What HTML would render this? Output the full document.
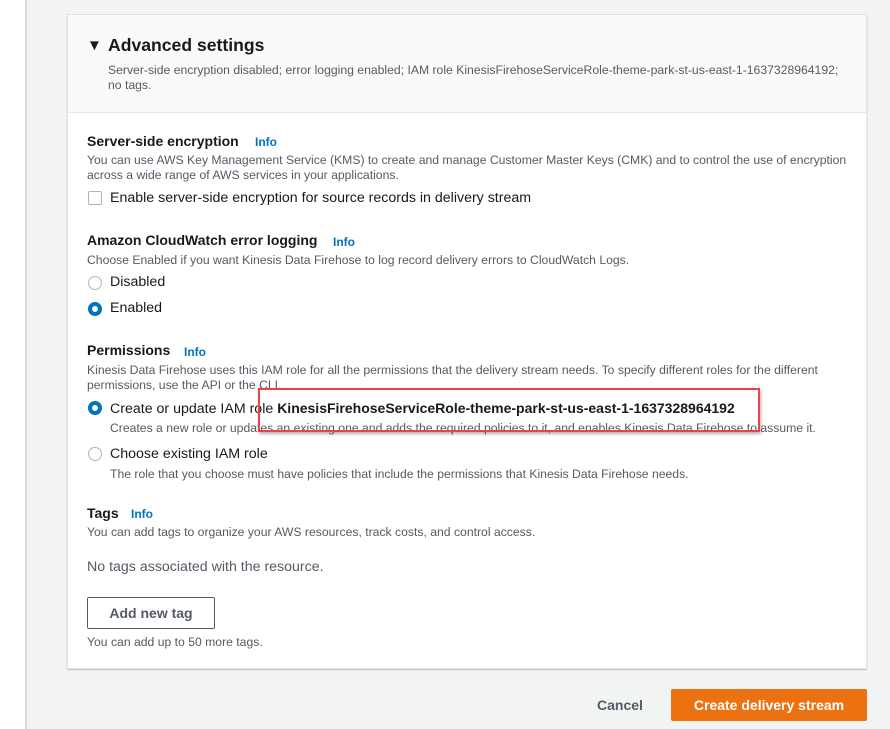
<!DOCTYPE html>
<html><head><style>
*{margin:0;padding:0;box-sizing:border-box}
body{width:890px;height:729px;position:relative;overflow:hidden;background:#f2f3f3;font-family:"Liberation Sans",sans-serif;color:#16191f}
.l{position:absolute;left:0;top:0;width:27px;height:729px;background:#fff;border-right:2px solid #d5dbdb}
.card{position:absolute;left:67px;top:14px;width:800px;height:655px;background:#fff;border:1px solid #e0e3e3;box-shadow:0 1px 1px rgba(0,0,0,.2)}
.hd{position:absolute;left:0;top:0;width:798px;height:98px;background:#fafafa;border-bottom:1px solid #e5e8e8}
.t{position:absolute;white-space:nowrap}
.h{font-size:14px;font-weight:bold}
.s{font-size:12.2px!important;color:#545b64}
.n{font-size:14.2px}
.i{font-size:12px;font-weight:bold;color:#0073bb}
.rad{position:absolute;width:14px;height:14px;border-radius:50%;border:1px solid #aab7b8;background:#fff}
.rad.on{border:4px solid #0073bb}
</style></head><body>
<div class="l"></div>
<div class="card">
<div class="hd"></div>
<div class="t" style="left:19px;top:22px;font-size:15px">▼</div>
<div class="t" style="left:40px;top:20px;font-size:17.6px;font-weight:bold">Advanced settings</div>
<div class="t s" style="left:40px;top:48px">Server-side encryption disabled; error logging enabled; IAM role KinesisFirehoseServiceRole-theme-park-st-us-east-1-1637328964192;</div>
<div class="t s" style="left:40px;top:63px">no tags.</div>

<div class="t h" style="left:19px;top:118px">Server-side encryption</div><div class="t i" style="left:187px;top:120px">Info</div>
<div class="t s" style="left:19px;top:138px">You can use AWS Key Management Service (KMS) to create and manage Customer Master Keys (CMK) and to control the use of encryption</div>
<div class="t s" style="left:19px;top:153px">across a wide range of AWS services in your applications.</div>
<div style="position:absolute;left:20px;top:176px;width:14px;height:14px;border:1px solid #aab7b8;border-radius:2px"></div>
<div class="t n" style="left:42px;top:175px">Enable server-side encryption for source records in delivery stream</div>

<div class="t h" style="left:19px;top:217px">Amazon CloudWatch error logging</div><div class="t i" style="left:265px;top:220px">Info</div>
<div class="t s" style="left:19px;top:238px">Choose Enabled if you want Kinesis Data Firehose to log record delivery errors to CloudWatch Logs.</div>
<div class="rad" style="left:20px;top:261px"></div><div class="t n" style="left:42px;top:259px">Disabled</div>
<div class="rad on" style="left:20px;top:287px"></div><div class="t n" style="left:42px;top:285px">Enabled</div>

<div class="t h" style="left:19px;top:327px">Permissions</div><div class="t i" style="left:116px;top:330px">Info</div>
<div class="t s" style="left:19px;top:348px">Kinesis Data Firehose uses this IAM role for all the permissions that the delivery stream needs. To specify different roles for the different</div>
<div class="t s" style="left:19px;top:363px">permissions, use the API or the CLI.</div>
<div class="rad on" style="left:20px;top:386px"></div><div class="t n" style="left:42px;top:385px">Create or update IAM role <b style="font-size:14px">KinesisFirehoseServiceRole-theme-park-st-us-east-1-1637328964192</b></div>
<div class="t s" style="left:42px;top:406px">Creates a new role or updates an existing one and adds the required policies to it, and enables Kinesis Data Firehose to assume it.</div>
<div class="rad" style="left:20px;top:432px"></div><div class="t n" style="left:42px;top:431px">Choose existing IAM role</div>
<div class="t s" style="left:42px;top:452px">The role that you choose must have policies that include the permissions that Kinesis Data Firehose needs.</div>

<div class="t h" style="left:19px;top:490px">Tags</div><div class="t i" style="left:63px;top:492px">Info</div>
<div class="t s" style="left:19px;top:510px">You can add tags to organize your AWS resources, track costs, and control access.</div>
<div class="t n" style="left:19px;top:544px;color:#545b64">No tags associated with the resource.</div>
<div style="position:absolute;left:19px;top:582px;width:128px;height:32px;border:1px solid #545b64;border-radius:2px;font-size:14px;font-weight:bold;color:#545b64;text-align:center;line-height:30px">Add new tag</div>
<div class="t s" style="left:19px;top:620px">You can add up to 50 more tags.</div>
</div>
<div style="position:absolute;left:258px;top:388px;width:502px;height:44px;border:2px solid #e8434a;box-shadow:1px 2px 3px rgba(0,0,0,.3)"></div>
<div class="t" style="left:597px;top:697px;font-size:14px;font-weight:bold;color:#545b64">Cancel</div>
<div style="position:absolute;left:671px;top:689px;width:196px;height:32px;background:#ec7211;border-radius:2px;color:#fff;font-size:14px;font-weight:bold;text-align:center;line-height:32px">Create delivery stream</div>
</body></html>
